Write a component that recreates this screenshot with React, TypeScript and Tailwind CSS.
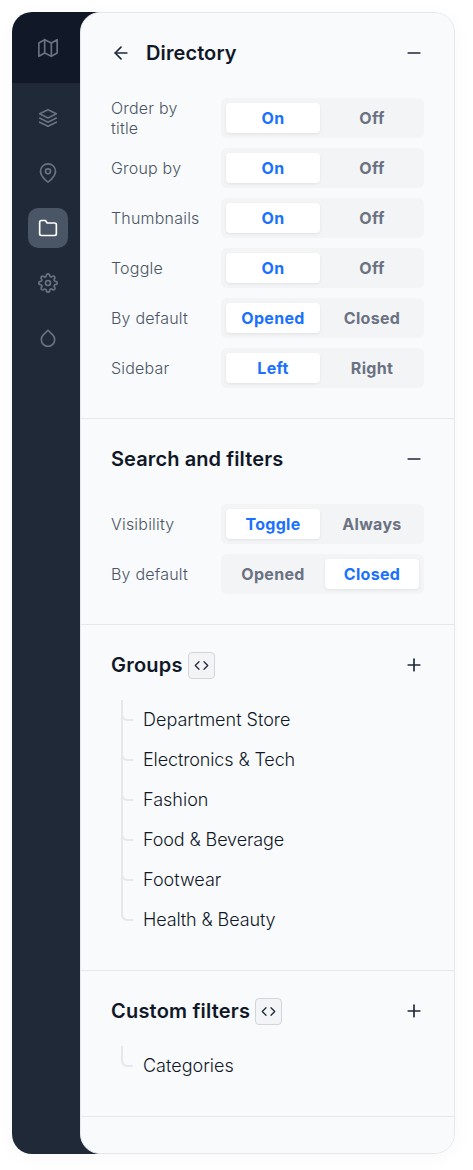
import { ReactNode } from "react";
import {
  FiArrowLeft,
  FiCode,
  FiDroplet,
  FiFolder,
  FiLayers,
  FiMap,
  FiMapPin,
  FiMinus,
  FiPlus,
  FiSettings,
} from "react-icons/fi";

function Segmented({ options, active }: { options: string[]; active: number }) {
  return (
    <div className="grid h-10 w-[203px] shrink-0 grid-cols-2 gap-[5px] rounded-md bg-[#f3f4f6] p-[5px]">
      {options.map((option, i) => (
        <button
          key={option}
          className={
            i === active
              ? "rounded bg-white text-base font-bold tracking-[0.3px] text-[#1a70ff] shadow-[0_1px_3px_rgba(0,0,0,0.08)]"
              : "rounded text-base font-bold tracking-[0.3px] text-gray-500"
          }
        >
          {option}
        </button>
      ))}
    </div>
  );
}

function Setting({ label, options, active = 0 }: { label: string; options: string[]; active?: number }) {
  return (
    <div className="flex h-10 items-center justify-between">
      <span className="w-[90px] text-base leading-5 font-light tracking-[0.2px] text-gray-600">{label}</span>
      <Segmented options={options} active={active} />
    </div>
  );
}

interface SectionProps {
  title: string;
  back?: boolean;
  code?: boolean;
  open?: boolean;
  children: ReactNode;
}

function Section({ title, back, code, open, children }: SectionProps) {
  return (
    <section className="border-b border-gray-200 px-[30px] pb-[30px]">
      <header className="flex h-20 items-center">
        {back && <FiArrowLeft size={20} className="mr-[15px] text-gray-800" />}
        <h2
          className={
            code
              ? "text-xl font-semibold tracking-[0.2px] text-gray-900"
              : "text-xl font-semibold tracking-[0.1px] text-gray-900"
          }
        >
          {title}
        </h2>
        {code && (
          <span className="ml-[5px] flex size-[27px] items-center justify-center rounded border border-gray-300 bg-gray-100 text-gray-800">
            <FiCode size={15} />
          </span>
        )}
        {open ? (
          <FiMinus size={20} className="ml-auto text-gray-800" />
        ) : (
          <FiPlus size={20} className="ml-auto text-gray-800" />
        )}
      </header>
      {children}
    </section>
  );
}

function Tree({ items }: { items: string[] }) {
  return (
    <ul className="-mt-[5px] pl-[10px]">
      {items.map((item, i) => (
        <li key={item} className="flex h-10 text-lg font-light text-gray-900">
          <svg width="22" height="40" viewBox="0 0 22 40" fill="none" stroke="#e5e7eb" strokeWidth="2" className="shrink-0">
            <path d={i === items.length - 1 ? "M1 0v14q0 6 6 6h5" : "M1 0v40M1 14q0 6 6 6h5"} />
          </svg>
          <span className={item.includes("&") ? "leading-10 tracking-[-0.12px]" : "leading-10"}>{item}</span>
        </li>
      ))}
    </ul>
  );
}

const nav = [
  { name: "Layers", Icon: FiLayers },
  { name: "Locations", Icon: FiMapPin },
  { name: "Directory", Icon: FiFolder, active: true },
  { name: "Settings", Icon: FiSettings },
  { name: "Style", Icon: FiDroplet },
];

export default function App() {
  return (
    <div className="h-[1170px] bg-white p-3 font-['Inter',sans-serif]">
      <div className="flex h-[1142px] w-[443px] overflow-hidden rounded-[20px] bg-[linear-gradient(#111827_71px,#1f2937_71px)] bg-[length:200px_100%] bg-no-repeat shadow-[0_4px_20px_rgba(0,0,0,0.03)]">
        <aside className="w-[68px] shrink-0 pl-1">
          <div className="flex h-[71px] items-center justify-center text-gray-500">
            <FiMap size={20} />
          </div>
          <nav className="flex flex-col items-center gap-[15px] pt-[15px]">
            {nav.map(({ name, Icon, active }) => (
              <button
                key={name}
                aria-label={name}
                className={
                  active
                    ? "flex size-10 items-center justify-center rounded-[10px] bg-gray-600 text-white"
                    : "flex size-10 items-center justify-center rounded-[10px] text-gray-500"
                }
              >
                <Icon size={20} />
              </button>
            ))}
          </nav>
        </aside>
        <main className="w-[375px] shrink-0 rounded-[20px] border border-gray-200 bg-gray-50">
          <Section title="Directory" back open>
            <div className="flex flex-col gap-2.5 pt-[5px]">
              <Setting label="Order by title" options={["On", "Off"]} />
              <Setting label="Group by" options={["On", "Off"]} />
              <Setting label="Thumbnails" options={["On", "Off"]} />
              <Setting label="Toggle" options={["On", "Off"]} />
              <Setting label="By default" options={["Opened", "Closed"]} />
              <Setting label="Sidebar" options={["Left", "Right"]} />
            </div>
          </Section>
          <Section title="Search and filters" open>
            <div className="flex flex-col gap-2.5 pt-[5px]">
              <Setting label="Visibility" options={["Toggle", "Always"]} />
              <Setting label="By default" options={["Opened", "Closed"]} active={1} />
            </div>
          </Section>
          <Section title="Groups" code>
            <Tree items={["Department Store", "Electronics & Tech", "Fashion", "Food & Beverage", "Footwear", "Health & Beauty"]} />
          </Section>
          <Section title="Custom filters" code>
            <Tree items={["Categories"]} />
          </Section>
        </main>
      </div>
    </div>
  );
}
